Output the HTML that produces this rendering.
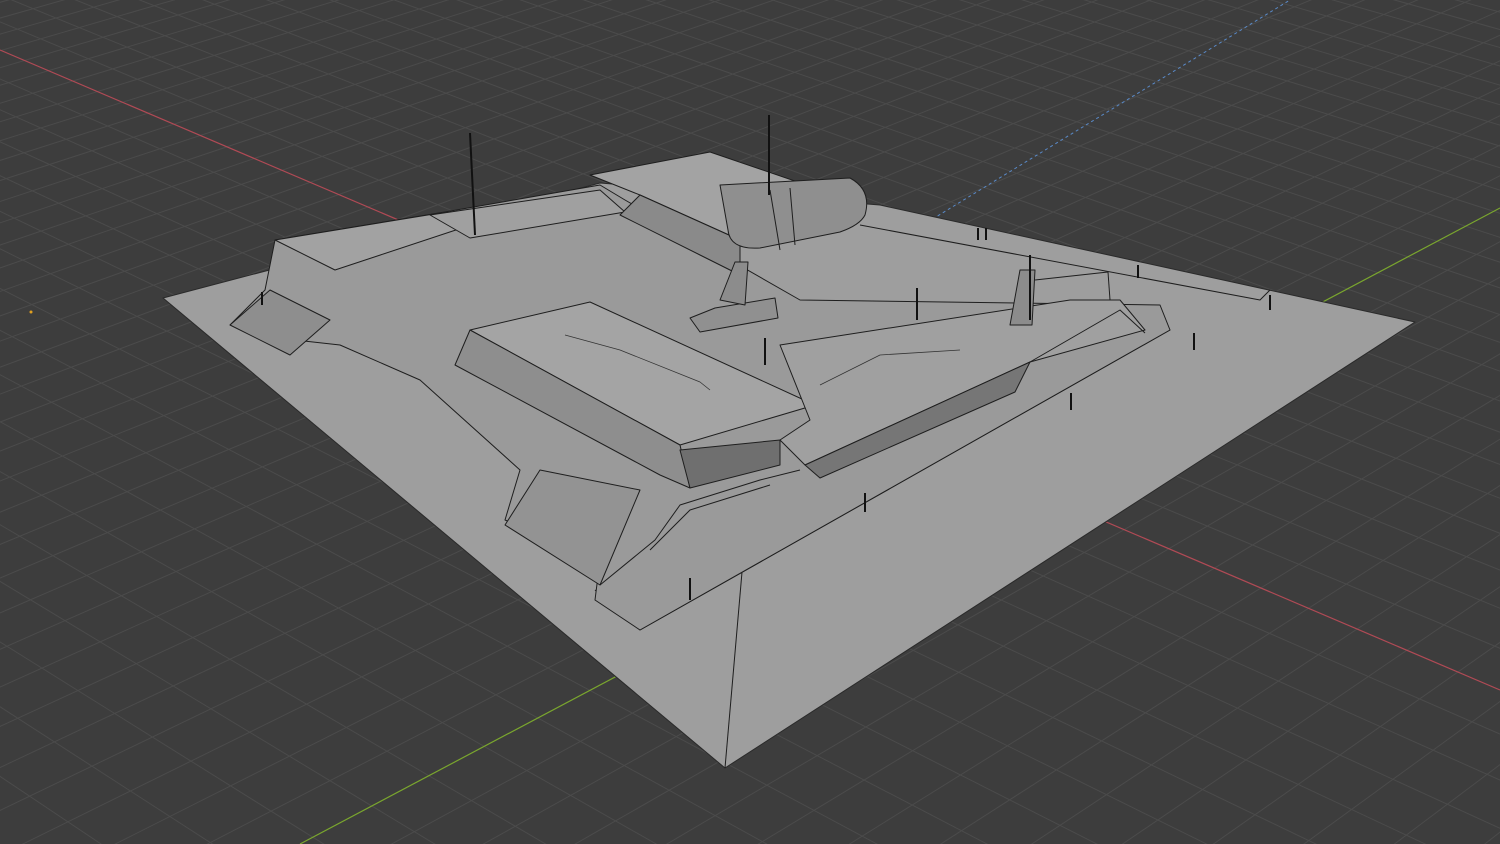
<!DOCTYPE html>
<html><head><meta charset="utf-8"><style>
html,body{margin:0;padding:0;background:#3d3d3d;overflow:hidden;width:1500px;height:844px}
svg{display:block;position:absolute;left:0;top:0}
</style></head><body>
<svg id="s" width="1500" height="844" viewBox="0 0 1500 844" xmlns="http://www.w3.org/2000/svg">
<rect width="1500" height="844" fill="#3d3d3d"/>
<g id="grid" stroke="#4b4b4b" stroke-width="1"></g>
<line x1="0" y1="50" x2="1500" y2="690" stroke="#b04a55" stroke-width="1.2"/>
<line x1="300" y1="844" x2="1500" y2="208" stroke="#7aa62e" stroke-width="1.2"/>
<line x1="820" y1="288" x2="1290" y2="0" stroke="#5a8ac8" stroke-width="1" stroke-dasharray="3,3"/>
<circle cx="31" cy="312" r="1.5" fill="#e0a020"/>
<g stroke="#1e1e1e" stroke-width="1" fill="#9e9e9e" stroke-linejoin="round">
<polygon points="163,298 600,183 880,205 1415,322 725,768" stroke="#2a2a2a"/>
<line x1="725" y1="768" x2="750" y2="480"/>
<polyline fill="none" points="595,590 640,630 1170,330 1130,305"/>
<polyline fill="none" points="860,225 1260,300 1270,290"/>
<polygon points="275,240 445,212 600,185 625,200 800,300 1160,305 1170,330 640,630 595,600 600,560 505,520 520,470 420,380 340,345 295,340 230,325 265,290" fill="#9a9a9a"/>
<polygon points="230,325 270,290 330,320 290,355" fill="#8e8e8e"/>
<polygon points="505,525 540,470 640,490 600,585" fill="#939393"/>
<polyline fill="none" points="600,585 655,540 680,505 760,480 800,470"/>
<polyline fill="none" points="650,550 690,510 770,485"/>
<polygon points="275,240 440,213 480,222 335,270" fill="#a2a2a2"/>
<polygon points="430,215 600,190 625,212 470,238" fill="#a0a0a0"/>
<polygon points="590,175 710,152 865,205 740,240 640,195" fill="#a3a3a3"/>
<polygon points="640,195 740,240 740,275 700,255 620,215" fill="#8a8a8a"/>
<path d="M720,185 L850,178 Q872,190 865,215 Q860,225 840,232 L760,248 Q730,250 728,230 Z" fill="#8f8f8f"/>
<line x1="770" y1="190" x2="780" y2="250"/>
<line x1="790" y1="188" x2="795" y2="245"/>
<polygon points="690,318 715,308 775,298 778,318 700,332" fill="#909090"/>
<polygon points="720,300 735,262 748,262 745,305" fill="#8c8c8c"/>
<polygon points="470,330 590,302 815,405 680,445" fill="#a4a4a4"/>
<polygon points="455,365 470,330 680,445 690,488 660,475" fill="#8e8e8e"/>
<polygon points="680,450 780,440 780,465 690,488" fill="#6f6f6f"/>
<polygon points="780,345 1070,300 1120,300 1145,330 1030,362 805,465 780,440 810,420" fill="#a0a0a0"/>
<polygon points="805,465 1030,362 1015,392 820,478" fill="#767676"/>
<polyline fill="none" points="1030,362 1120,310 1145,333"/>
<polygon points="1010,325 1020,270 1035,270 1032,325" fill="#8c8c8c"/>
<line x1="1035" y1="280" x2="1108" y2="272"/>
<line x1="1108" y1="272" x2="1110" y2="300"/>
<g fill="none" stroke="#333" stroke-width="0.8">
<polyline points="565,335 620,350 700,382 710,390"/>
<polyline points="820,385 880,355 960,350"/>
</g>
<g stroke="#111" stroke-width="2">
<line x1="470" y1="133" x2="475" y2="235"/>
<line x1="769" y1="115" x2="769" y2="195"/>
<line x1="1030" y1="255" x2="1030" y2="320"/>
<line x1="262" y1="292" x2="262" y2="305"/>
<line x1="917" y1="288" x2="917" y2="320"/>
<line x1="765" y1="338" x2="765" y2="365"/>
<line x1="1071" y1="393" x2="1071" y2="410"/>
<line x1="1194" y1="333" x2="1194" y2="350"/>
<line x1="1270" y1="295" x2="1270" y2="310"/>
<line x1="1138" y1="265" x2="1138" y2="278"/>
<line x1="865" y1="493" x2="865" y2="512"/>
<line x1="690" y1="578" x2="690" y2="600"/>
<line x1="978" y1="228" x2="978" y2="240"/>
<line x1="986" y1="228" x2="986" y2="240"/>
</g>
</g>
</svg>
<script>
(function(){
var g=document.getElementById('grid');
var O=[996,475],V1=[-3000,-1231],V2=[4000,-1117];
var a=45/Math.hypot(V1[0]-O[0],V1[1]-O[1]);
var b=45/Math.hypot(V2[0]-O[0],V2[1]-O[1]);
function P(X,Y){var w=a*X+b*Y+1;return [(a*X*V1[0]+b*Y*V2[0]+O[0])/w,(a*X*V1[1]+b*Y*V2[1]+O[1])/w];}
var lim=0.06,s='';
function seg(f){
  var pts=[];for(var t=-300;t<=400;t+=1){var q=f(t);if(a*q[0]+b*q[1]+1>lim)pts.push(q);}
  if(pts.length<2)return;var p1=P(pts[0][0],pts[0][1]),p2=P(pts[pts.length-1][0],pts[pts.length-1][1]);
  s+='<line x1="'+p1[0].toFixed(1)+'" y1="'+p1[1].toFixed(1)+'" x2="'+p2[0].toFixed(1)+'" y2="'+p2[1].toFixed(1)+'"/>';
}
for(var k=-90;k<=300;k++){if(k==0)continue;seg(function(t){return [k,t]});seg(function(t){return [t,k]});}
g.innerHTML=s;
})();
</script>
</body></html>
